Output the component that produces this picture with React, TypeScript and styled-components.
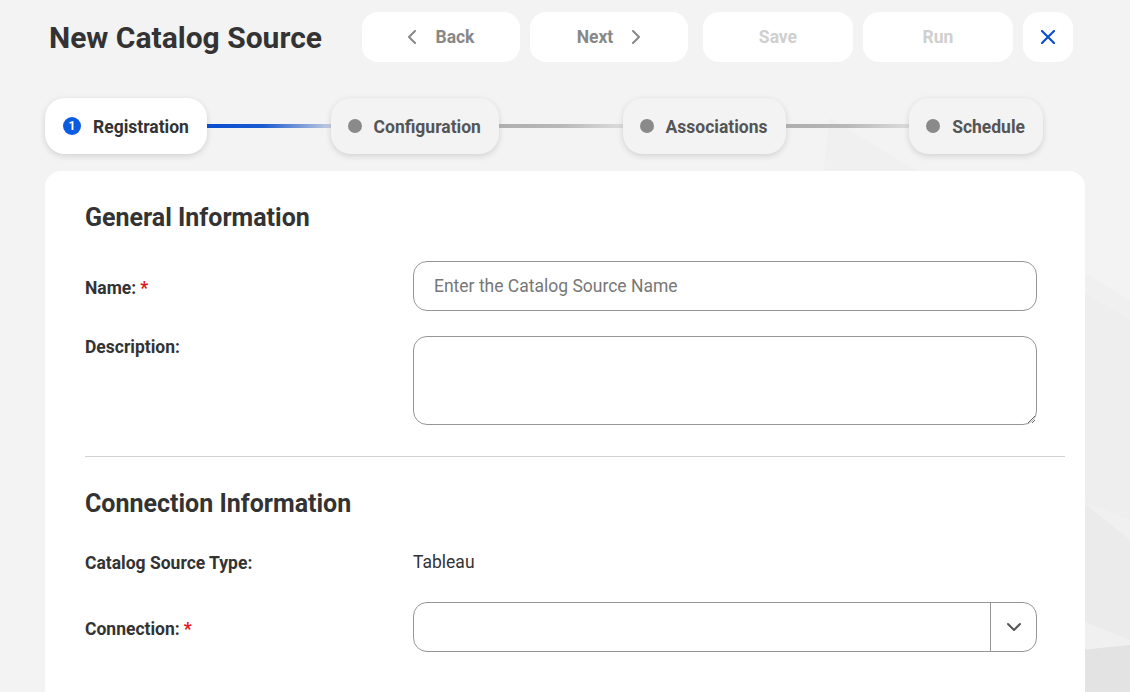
import React from "react";
import styled, { createGlobalStyle } from "styled-components";

const GlobalStyle = createGlobalStyle`
  html, body {
    margin: 0;
    padding: 0;
    background: #f3f3f3;
    font-family: Roboto, "Liberation Sans", Arial, sans-serif;
    color: #333;
  }
  * { box-sizing: border-box; }
`;

const Page = styled.div`
  position: relative;
  width: 1130px;
  height: 692px;
  overflow: hidden;
  background: #f3f3f3;
`;

const Backdrop = styled.svg`
  position: absolute;
  inset: 0;
  width: 100%;
  height: 100%;
  z-index: 0;
`;

const Content = styled.div`
  position: relative;
  z-index: 1;
  display: flex;
  flex-direction: column;
`;

const Header = styled.header`
  display: flex;
  align-items: center;
  height: 50px;
  margin-top: 12px;
  padding-left: 49px;
`;

const Title = styled.h1`
  margin: 0 40px 0 0;
  font-size: 30px;
  font-weight: 700;
  color: #333;
  white-space: nowrap;
`;

const Actions = styled.div`
  display: flex;
  align-items: center;
  gap: 10px;
`;

const ActionButton = styled.button<{ $w: number; $tone?: "muted" | "disabled" | "accent"; $gapLeft?: number }>`
  width: ${(p) => p.$w}px;
  height: 50px;
  margin-left: ${(p) => p.$gapLeft ?? 0}px;
  border: none;
  border-radius: 16px;
  background: #fff;
  display: flex;
  align-items: center;
  justify-content: center;
  gap: 18px;
  font-family: inherit;
  font-size: 17.5px;
  font-weight: 700;
  color: ${(p) => (p.$tone === "disabled" ? "#cfcfcf" : p.$tone === "accent" ? "#0b4fd1" : "#888")};
  cursor: pointer;
  padding: 0;
`;

const Stepper = styled.div`
  display: flex;
  align-items: center;
  width: 998px;
  margin: 36px 0 0 45px;
`;

const StepPill = styled.div<{ $active?: boolean }>`
  height: 56px;
  display: flex;
  align-items: center;
  gap: 12px;
  padding: 2px 18px 0 ${(p) => (p.$active ? 18 : 17)}px;
  border-radius: 20px;
  background: ${(p) => (p.$active ? "#fff" : "#f3f3f3")};
  box-shadow: 0 2px 6px rgba(0, 0, 0, 0.14);
  font-size: 17.5px;
  font-weight: 700;
  color: ${(p) => (p.$active ? "#333" : "#555")};
  white-space: nowrap;
  flex-shrink: 0;
`;

const StepNumber = styled.span`
  width: 18px;
  height: 18px;
  margin-top: -2px;
  border-radius: 50%;
  background: #0a5be0;
  color: #fff;
  font-size: 12px;
  font-weight: 700;
  display: flex;
  align-items: center;
  justify-content: center;
`;

const StepDot = styled.span`
  width: 14px;
  height: 14px;
  margin-top: -2px;
  border-radius: 50%;
  background: #8a8a8a;
`;

const Connector = styled.div<{ $active?: boolean }>`
  flex: 1;
  height: 4px;
  background: ${(p) =>
    p.$active
      ? "linear-gradient(90deg, #0a4ecf 0%, #1a5ad0 45%, #c4cde0 100%)"
      : "linear-gradient(90deg, #aeaeae 0%, #b8b8b8 50%, #dcdcdc 100%)"};
`;

const Card = styled.main`
  margin: 17px 0 0 45px;
  width: 1040px;
  height: 560px;
  background: #fff;
  border-radius: 16px;
  padding: 32px 20px 0 40px;
`;

const SectionTitle = styled.h2`
  margin: 0;
  height: 30px;
  line-height: 30px;
  font-size: 25px;
  font-weight: 700;
  color: #333;
`;

const FormRow = styled.div<{ $top: number; $align?: "center" | "start"; $h?: number }>`
  display: grid;
  grid-template-columns: 328px 624px;
  align-items: ${(p) => (p.$align === "start" ? "start" : "center")};
  margin-top: ${(p) => p.$top}px;
  ${(p) => (p.$h ? `height: ${p.$h}px;` : "")}
`;

const Label = styled.label<{ $padTop?: number }>`
  font-size: 17.5px;
  font-weight: 700;
  color: #333;
  padding-top: ${(p) => p.$padTop ?? 0}px;
`;

const Required = styled.span`
  color: #e0141e;
  margin-left: 4px;
`;

const TextInput = styled.input`
  width: 624px;
  height: 50px;
  border: 1px solid #969696;
  border-radius: 14px;
  padding: 0 20px;
  font-family: inherit;
  font-size: 17.5px;
  color: #333;
  outline: none;
  &::placeholder {
    color: #777;
  }
`;

const TextArea = styled.textarea`
  width: 624px;
  height: 89px;
  border: 1px solid #969696;
  border-radius: 14px;
  padding: 12px 20px;
  font-family: inherit;
  font-size: 17.5px;
  outline: none;
  resize: vertical;
  display: block;
`;

const Divider = styled.hr`
  margin: 31px 0 32px 0;
  border: none;
  border-top: 1px solid #d2d2d2;
  width: 980px;
`;

const Value = styled.span`
  font-size: 17.5px;
  color: #333;
`;

const Select = styled.div`
  width: 624px;
  height: 50px;
  border: 1px solid #969696;
  border-radius: 14px;
  display: flex;
  overflow: hidden;
`;

const SelectField = styled.div`
  flex: 1;
`;

const SelectToggle = styled.div`
  width: 46px;
  border-left: 1px solid #969696;
  display: flex;
  align-items: center;
  justify-content: center;
`;

const Chevron = ({ dir, color = "#888" }: { dir: "left" | "right" | "down"; color?: string }) => {
  const d = dir === "left" ? "M8 1 L2 7 L8 13" : dir === "right" ? "M2 1 L8 7 L2 13" : "M1 2 L7 8 L13 2";
  const w = dir === "down" ? 14 : 10;
  const h = dir === "down" ? 10 : 14;
  return (
    <svg width={w} height={h} viewBox={`0 0 ${w} ${h}`} fill="none">
      <path d={d} stroke={color} strokeWidth="2" strokeLinecap="round" strokeLinejoin="round" />
    </svg>
  );
};

const CloseIcon = () => (
  <svg width="14" height="14" viewBox="0 0 14 14" fill="none">
    <path d="M1 1 L13 13 M13 1 L1 13" stroke="#0b4fd1" strokeWidth="2.2" strokeLinecap="round" />
  </svg>
);

const steps = ["Configuration", "Associations", "Schedule"];

export default function App() {
  return (
    <Page>
      <GlobalStyle />
      <Backdrop viewBox="0 0 1130 692" preserveAspectRatio="none">
        <polygon points="830,118 1130,300 1130,692 760,692" fill="#f0f0f0" />
        <polygon points="1080,290 1130,320 1130,520 1080,500" fill="#eeeeee" />
        <polygon points="1080,500 1130,540 1130,640 1080,620" fill="#ebebeb" />
        <polygon points="1080,650 1130,645 1130,692 1080,692" fill="#e3e3e3" />
      </Backdrop>
      <Content>
        <Header>
          <Title>New Catalog Source</Title>
          <Actions>
            <ActionButton $w={158} $tone="muted">
              <Chevron dir="left" />
              Back
            </ActionButton>
            <ActionButton $w={158} $tone="muted">
              Next
              <Chevron dir="right" />
            </ActionButton>
            <ActionButton $w={150} $tone="disabled" $gapLeft={5}>
              Save
            </ActionButton>
            <ActionButton $w={150} $tone="disabled">
              Run
            </ActionButton>
            <ActionButton $w={50} $tone="accent">
              <CloseIcon />
            </ActionButton>
          </Actions>
        </Header>

        <Stepper>
          <StepPill $active>
            <StepNumber>1</StepNumber>
            Registration
          </StepPill>
          {steps.map((s, i) => (
            <React.Fragment key={s}>
              <Connector $active={i === 0} />
              <StepPill>
                <StepDot />
                {s}
              </StepPill>
            </React.Fragment>
          ))}
        </Stepper>

        <Card>
          <SectionTitle>General Information</SectionTitle>
          <FormRow $top={28}>
            <Label $padTop={3}>
              Name:<Required>*</Required>
            </Label>
            <TextInput placeholder="Enter the Catalog Source Name" />
          </FormRow>
          <FormRow $top={25} $align="start">
            <Label $padTop={1}>Description:</Label>
            <TextArea />
          </FormRow>
          <Divider />
          <SectionTitle>Connection Information</SectionTitle>
          <FormRow $top={18} $h={50}>
            <Label $padTop={2}>Catalog Source Type:</Label>
            <Value>Tableau</Value>
          </FormRow>
          <FormRow $top={15}>
            <Label $padTop={3}>
              Connection:<Required>*</Required>
            </Label>
            <Select>
              <SelectField />
              <SelectToggle>
                <Chevron dir="down" color="#555" />
              </SelectToggle>
            </Select>
          </FormRow>
        </Card>
      </Content>
    </Page>
  );
}
